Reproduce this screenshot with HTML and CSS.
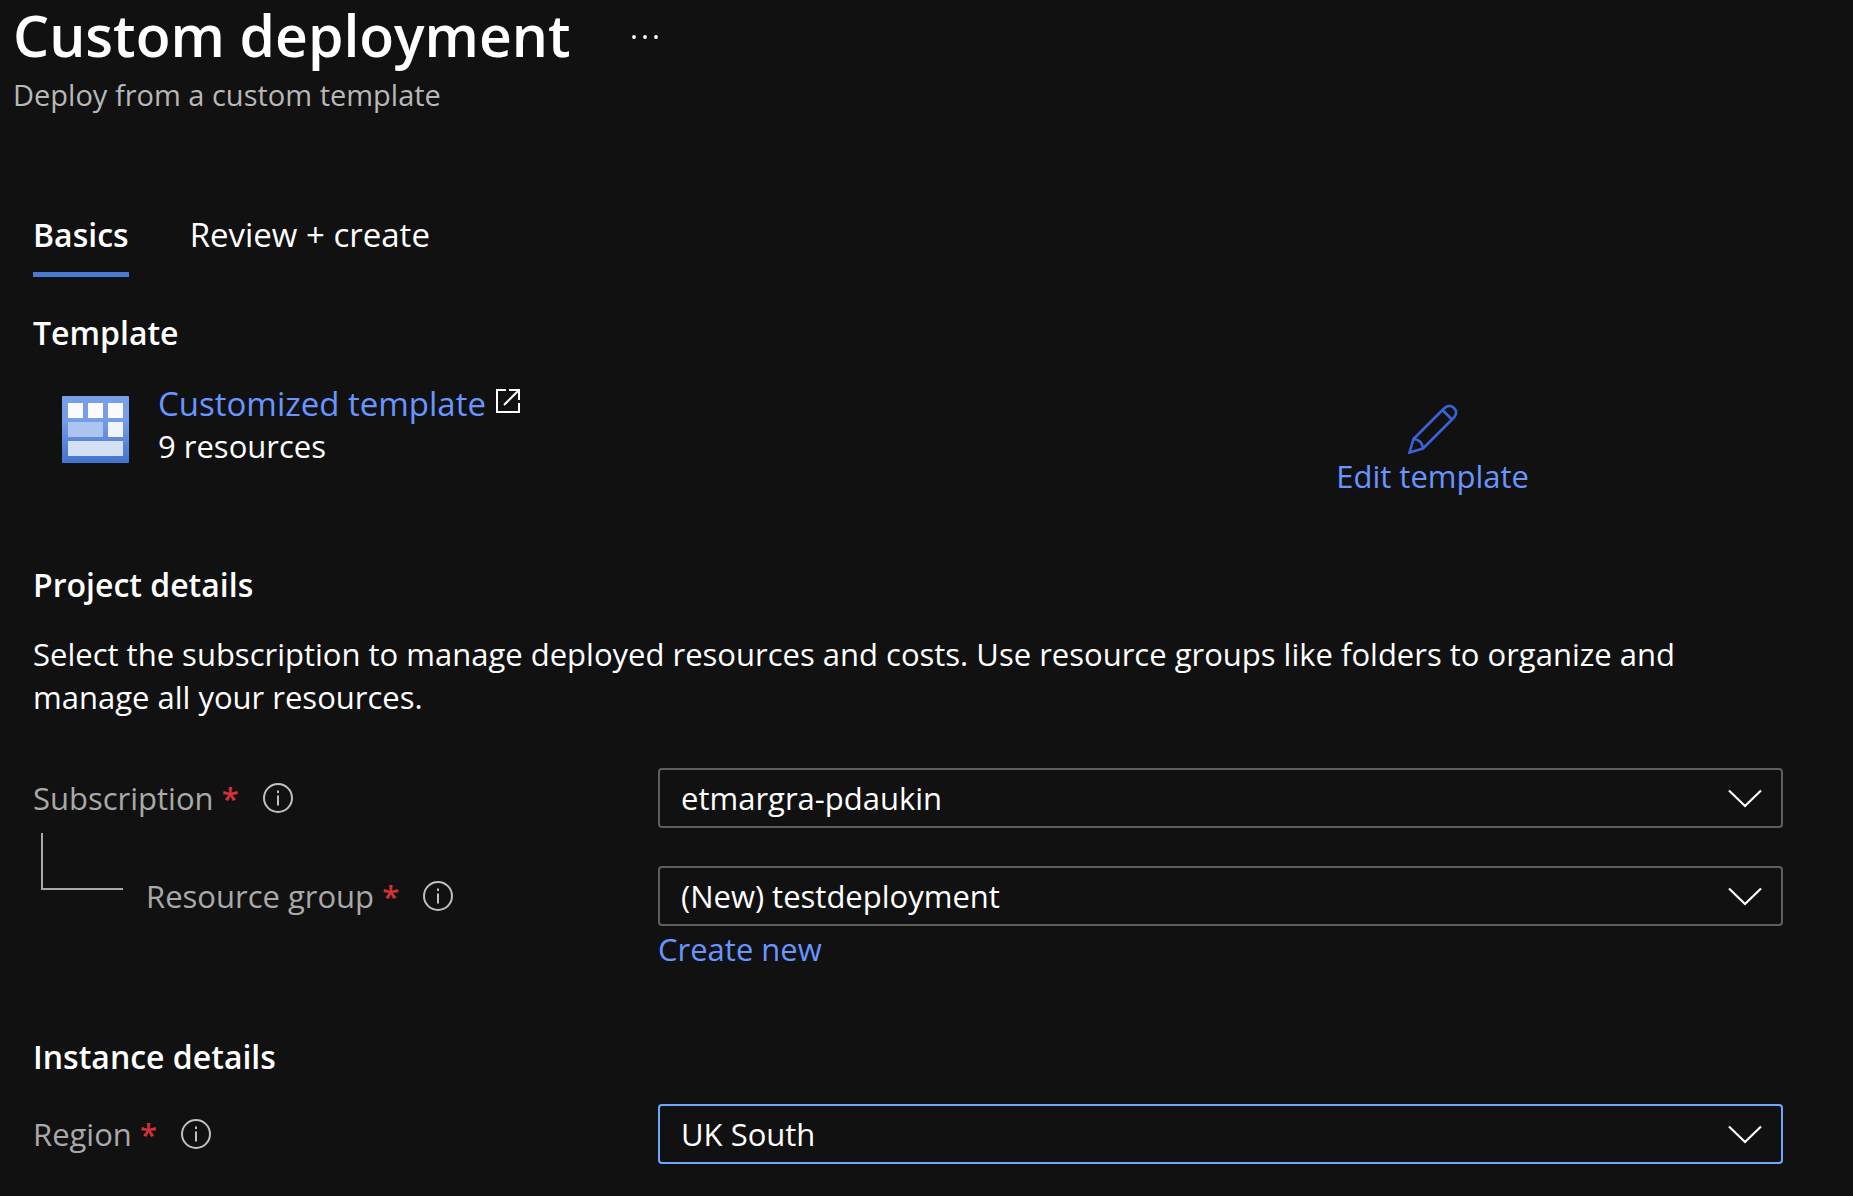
FILE: index.html
```html
<!DOCTYPE html>
<html lang="en">
<head>
<meta charset="utf-8">
<meta name="viewport" content="width=device-width, initial-scale=1">
<title>Custom deployment</title>
<link rel="stylesheet" href="styles.css">
</head>
<body>
<svg class="sprite" aria-hidden="true">
  <symbol id="info" viewBox="0 0 32 32">
    <circle cx="16" cy="16" r="14" fill="none" stroke="currentColor" stroke-width="2"/>
    <path d="M16 13.5V23.5M16 8.5V11" fill="none" stroke="currentColor" stroke-width="2"/>
  </symbol>
  <symbol id="chevron" viewBox="0 0 34 20">
    <path d="M1 1.500L17 17L33 1.500" fill="none" stroke="currentColor" stroke-width="2.200"/>
  </symbol>
</svg>
<header class="page-header">
  <div class="title-row">
    <h1 class="title">Custom deployment</h1>
    <button class="more" type="button" aria-label="More actions">
      <svg width="28" height="4" viewBox="0 0 28 4" fill="currentColor"><circle cx="3" cy="2" r="1.900"/><circle cx="14" cy="2" r="1.900"/><circle cx="25" cy="2" r="1.900"/></svg>
    </button>
  </div>
  <p class="subtitle">Deploy from a custom template</p>
</header>
<main class="content">
  <nav class="tabs">
    <a class="tab tab-active" href="#basics" aria-current="page">Basics</a>
    <a class="tab" href="#review">Review + create</a>
  </nav>

  <section id="basics">
    <h2 class="heading">Template</h2>
    <div class="template">
      <svg class="template-icon" viewBox="0 0 67 67" aria-hidden="true">
        <defs><linearGradient id="tile" x1="0" y1="0" x2="0" y2="1"><stop offset="0" stop-color="#7a9fe9"/><stop offset=".35" stop-color="#769de8"/><stop offset="1" stop-color="#4273cd"/></linearGradient></defs>
        <rect width="67" height="67" rx="1" fill="url(#tile)"/>
        <path d="M6 7h15v15H6zM26 7h15v15H26zM46 7h15v15H46z" fill="#fafbff"/>
        <path d="M6 26h35v15H6z" fill="#adc4f0"/>
        <path d="M46 26h15v15H46z" fill="#f0f4fd"/>
        <path d="M6 45h55v15H6z" fill="#d4e0f4"/>
      </svg>
      <div class="template-info">
        <a class="link template-link" href="#template">Customized template<svg class="external" viewBox="0 0 24 24" aria-hidden="true"><path d="M10 1H1v22h22v-9M13 1h10v10M8 16L23 1" fill="none" stroke="currentColor" stroke-width="2"/></svg></a>
        <span>9 resources</span>
      </div>
      <a class="link edit" href="#edit">
        <svg class="pencil" viewBox="0 0 50 50" aria-hidden="true"><path d="M1.500 48.500L5.500 35L36 4.500C39 1.500 43 .8 46 4C49.200 7 48.500 11 45.500 14L15 44.500ZM34.500 6L44 15.500M5.500 35C11 35.500 14.500 39 15 44.500" fill="none" stroke="#3b62d6" stroke-width="2.600"/></svg>
        Edit template
      </a>
    </div>
  </section>

  <section class="project">
    <h2 class="heading">Project details</h2>
    <p class="description">Select the subscription to manage deployed resources and costs. Use resource groups like folders to organize and manage all your resources.</p>
    <div class="field">
      <div class="label"><label for="subscription">Subscription <span class="required">*</span></label><svg class="info"><use href="#info"/></svg></div>
      <div class="select-box"><select id="subscription" class="select"><option>etmargra-pdaukin</option></select><svg class="chevron"><use href="#chevron"/></svg></div>
    </div>
    <div class="field">
      <div class="label label-child"><span class="branch"></span><label for="group">Resource group <span class="required">*</span></label><svg class="info"><use href="#info"/></svg></div>
      <div class="select-box"><select id="group" class="select"><option>(New) testdeployment</option></select><svg class="chevron"><use href="#chevron"/></svg></div>
      <a class="link create" href="#new">Create new</a>
    </div>
  </section>

  <section class="instance">
    <h2 class="heading">Instance details</h2>
    <div class="field field-near">
      <div class="label"><label for="region">Region <span class="required">*</span></label><svg class="info"><use href="#info"/></svg></div>
      <div class="select-box"><select id="region" class="select select-active"><option>UK South</option></select><svg class="chevron"><use href="#chevron"/></svg></div>
    </div>
  </section>
</main>
</body>
</html>
```
FILE: styles.css
```css
* { box-sizing: border-box; }
body {
  margin: 0;
  background: #111;
  color: #fff;
  font-family: "Segoe UI", "Open Sans", "Noto Sans", sans-serif;
  font-size: 31px;
  line-height: 43px;
}
h1, h2, p { margin: 0; }
a { color: inherit; text-decoration: none; }
.sprite { position: absolute; width: 0; height: 0; }
.page-header { padding: 0 13px; }
.title-row { display: flex; align-items: center; gap: 60px; }
.title { font-size: 57px; line-height: 70px; font-weight: 600; }
.more { display: flex; padding: 4px 0 0; border: 0; background: none; color: #fff; }
.subtitle { padding-top: 3px; font-size: 29px; color: #b8b8b8; }
.content { padding: 97px 70px 32px 33px; }
.tabs { display: flex; gap: 61px; }
.tab { padding-bottom: 16px; border-bottom: 5px solid transparent; font-size: 33px; }
.tab-active { font-size: 32px; font-weight: 600; border-color: #4a7bd0; }
.heading { font-size: 32px; line-height: 43px; font-weight: 600; }
#basics { padding-top: 34px; }
.template { display: flex; align-items: flex-start; padding: 28px 0 0 29px; }
.template-icon { width: 67px; height: 67px; margin-top: 14px; }
.template-info { display: flex; flex-direction: column; margin-left: 29px; }
.link { color: #6895ff; }
.template-link { display: flex; align-items: flex-start; font-size: 33px; }
.external { width: 24px; height: 24px; margin: 7px 0 0 10px; color: #fff; }
.edit { display: flex; flex-direction: column; align-items: center; gap: 1px; margin: 22px 254px 0 auto; }
.pencil { width: 50px; height: 50px; }
.project { padding-top: 65px; }
.description { padding: 27px 60px 11px 0; }
.field { display: grid; grid-template-columns: 625fr 1125fr; align-items: center; padding-top: 38px; }
.field-near { padding-top: 26px; }
.label { display: flex; align-items: center; color: #a9a9a9; }
.label-child { position: relative; padding-left: 113px; }
.branch { position: absolute; left: 8px; bottom: 28px; width: 82px; height: 57px; border: solid #a9a9a9; border-width: 0 0 2px 2px; }
.required { color: #d13438; font-weight: 600; }
.info { width: 32px; height: 32px; margin-left: 23px; color: #c0c0c0; }
.select-box { position: relative; }
.select {
  display: block;
  width: 100%;
  height: 60px;
  padding: 0 60px 0 21px;
  border: 2px solid #605e5c;
  border-radius: 4px;
  appearance: none;
  background: #111;
  color: #fff;
  font: inherit;
}
.select-active { border-color: #6ea8fe; }
.chevron { position: absolute; right: 21px; top: 21px; width: 34px; height: 20px; pointer-events: none; }
.create { grid-column: 2; justify-self: start; padding-top: 2px; }
.instance { padding-top: 64px; }
```
